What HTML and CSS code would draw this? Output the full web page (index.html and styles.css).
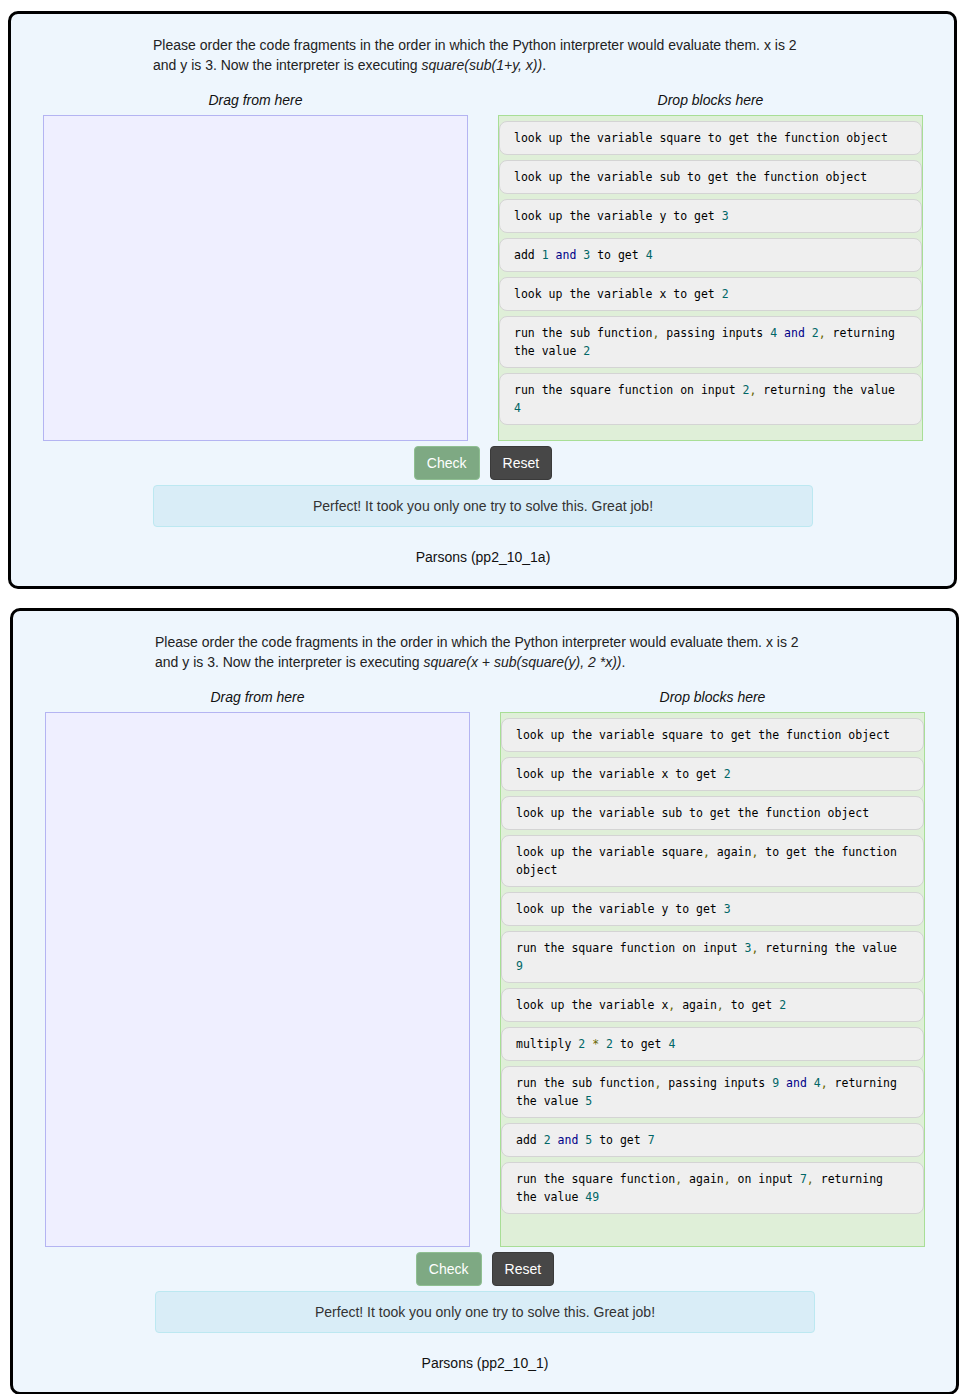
FILE: index.html
```html
<!DOCTYPE html>
<html lang="en">
<head>
<meta charset="utf-8">
<title>Parsons problems</title>
<link rel="stylesheet" href="styles.css">
</head>
<body>
<div class="page">

  <section class="card card-first">
    <p class="prompt">Please order the code fragments in the order in which the Python interpreter would evaluate them. x is 2 and y is 3. Now the interpreter is executing <em>square(sub(1+y, x))</em>.</p>
    <div class="columns">
      <div class="col">
        <div class="col-label">Drag from here</div>
        <div class="source area-sm"></div>
      </div>
      <div class="col">
        <div class="col-label">Drop blocks here</div>
        <div class="answer area-sm">
          <div class="block">look up the variable square to get the function object</div>
          <div class="block">look up the variable sub to get the function object</div>
          <div class="block">look up the variable y to get <span class="lit">3</span></div>
          <div class="block">add <span class="lit">1</span> <span class="kwd">and</span> <span class="lit">3</span> to get <span class="lit">4</span></div>
          <div class="block">look up the variable x to get <span class="lit">2</span></div>
          <div class="block">run the sub function<span class="pun">,</span> passing inputs <span class="lit">4</span> <span class="kwd">and</span> <span class="lit">2</span><span class="pun">,</span> returning the value <span class="lit">2</span></div>
          <div class="block">run the square function on input <span class="lit">2</span><span class="pun">,</span> returning the value <span class="lit">4</span></div>
        </div>
      </div>
    </div>
    <div class="actions">
      <button class="btn btn-check" type="button">Check</button>
      <button class="btn btn-reset" type="button">Reset</button>
    </div>
    <div class="alert">Perfect! It took you only one try to solve this. Great job!</div>
    <div class="caption">Parsons (pp2_10_1a)</div>
  </section>

  <section class="card card-second">
    <p class="prompt">Please order the code fragments in the order in which the Python interpreter would evaluate them. x is 2 and y is 3. Now the interpreter is executing <em>square(x + sub(square(y), 2 *x))</em>.</p>
    <div class="columns">
      <div class="col">
        <div class="col-label">Drag from here</div>
        <div class="source area-lg"></div>
      </div>
      <div class="col">
        <div class="col-label">Drop blocks here</div>
        <div class="answer area-lg">
          <div class="block">look up the variable square to get the function object</div>
          <div class="block">look up the variable x to get <span class="lit">2</span></div>
          <div class="block">look up the variable sub to get the function object</div>
          <div class="block">look up the variable square<span class="pun">,</span> again<span class="pun">,</span> to get the function object</div>
          <div class="block">look up the variable y to get <span class="lit">3</span></div>
          <div class="block">run the square function on input <span class="lit">3</span><span class="pun">,</span> returning the value <span class="lit">9</span></div>
          <div class="block">look up the variable x<span class="pun">,</span> again<span class="pun">,</span> to get <span class="lit">2</span></div>
          <div class="block">multiply <span class="lit">2</span> <span class="pun">*</span> <span class="lit">2</span> to get <span class="lit">4</span></div>
          <div class="block">run the sub function<span class="pun">,</span> passing inputs <span class="lit">9</span> <span class="kwd">and</span> <span class="lit">4</span><span class="pun">,</span> returning the value <span class="lit">5</span></div>
          <div class="block">add <span class="lit">2</span> <span class="kwd">and</span> <span class="lit">5</span> to get <span class="lit">7</span></div>
          <div class="block">run the square function<span class="pun">,</span> again<span class="pun">,</span> on input <span class="lit">7</span><span class="pun">,</span> returning the value <span class="lit">49</span></div>
        </div>
      </div>
    </div>
    <div class="actions">
      <button class="btn btn-check" type="button">Check</button>
      <button class="btn btn-reset" type="button">Reset</button>
    </div>
    <div class="alert">Perfect! It took you only one try to solve this. Great job!</div>
    <div class="caption">Parsons (pp2_10_1)</div>
  </section>

</div>
</body>
</html>
```

FILE: styles.css
```css
* {
  box-sizing: border-box;
}

html, body {
  margin: 0;
  padding: 0;
  background: #ffffff;
}

body {
  font-family: "Liberation Sans", Arial, sans-serif;
  font-size: 14px;
  line-height: 20px;
  color: #222222;
}

.page {
  display: flex;
  flex-direction: column;
  padding-top: 11px;
}

.card {
  width: 949px;
  border: 3px solid #000000;
  border-radius: 10px;
  background: #eef6fd;
  padding: 21px 0 19px 1px;
  display: flex;
  flex-direction: column;
  align-items: center;
}

.card-first {
  margin-left: 8px;
}

.card-second {
  margin-left: 10px;
  margin-top: 19px;
}

.prompt {
  width: 660px;
  margin: 0 0 15px;
}

.columns {
  display: flex;
  gap: 30px;
  width: 880px;
}

.col {
  width: 425px;
  display: flex;
  flex-direction: column;
}

.col-label {
  text-align: center;
  font-style: italic;
  margin-bottom: 5px;
  color: #111111;
}

.source {
  background: #efefff;
  border: 1px solid #b4b4f2;
}

.answer {
  background: #dfefd8;
  border: 1px solid #a8de96;
  padding-top: 5px;
  display: flex;
  flex-direction: column;
  gap: 5px;
}

.area-sm {
  height: 326px;
}

.area-lg {
  height: 535px;
}

.block {
  background: #efefef;
  border: 1px solid #d4d4d4;
  border-radius: 8px;
  padding: 7px 24px 7px 14px;
  font-family: "DejaVu Sans Mono", "Liberation Mono", monospace;
  font-size: 11.5px;
  line-height: 18px;
  color: #000000;
}

.lit {
  color: #006666;
}

.kwd {
  color: #000088;
}

.pun {
  color: #666600;
}

.actions {
  display: flex;
  justify-content: center;
  gap: 10px;
  margin-top: 5px;
}

.btn {
  font-family: "Liberation Sans", Arial, sans-serif;
  font-size: 14px;
  line-height: 20px;
  padding: 6px 12px;
  border-radius: 4px;
  color: #ffffff;
  cursor: pointer;
}

.btn-check {
  background: #7ea983;
  border: 1px solid #8fbf92;
}

.btn-reset {
  background: #474747;
  border: 1px solid #3a3a3a;
}

.alert {
  width: 660px;
  margin-top: 5px;
  padding: 10px;
  background: #d9edf7;
  border: 1px solid #bce8f1;
  border-radius: 4px;
  text-align: center;
  color: #333333;
}

.caption {
  margin-top: 20px;
  text-align: center;
  color: #111111;
}
```
